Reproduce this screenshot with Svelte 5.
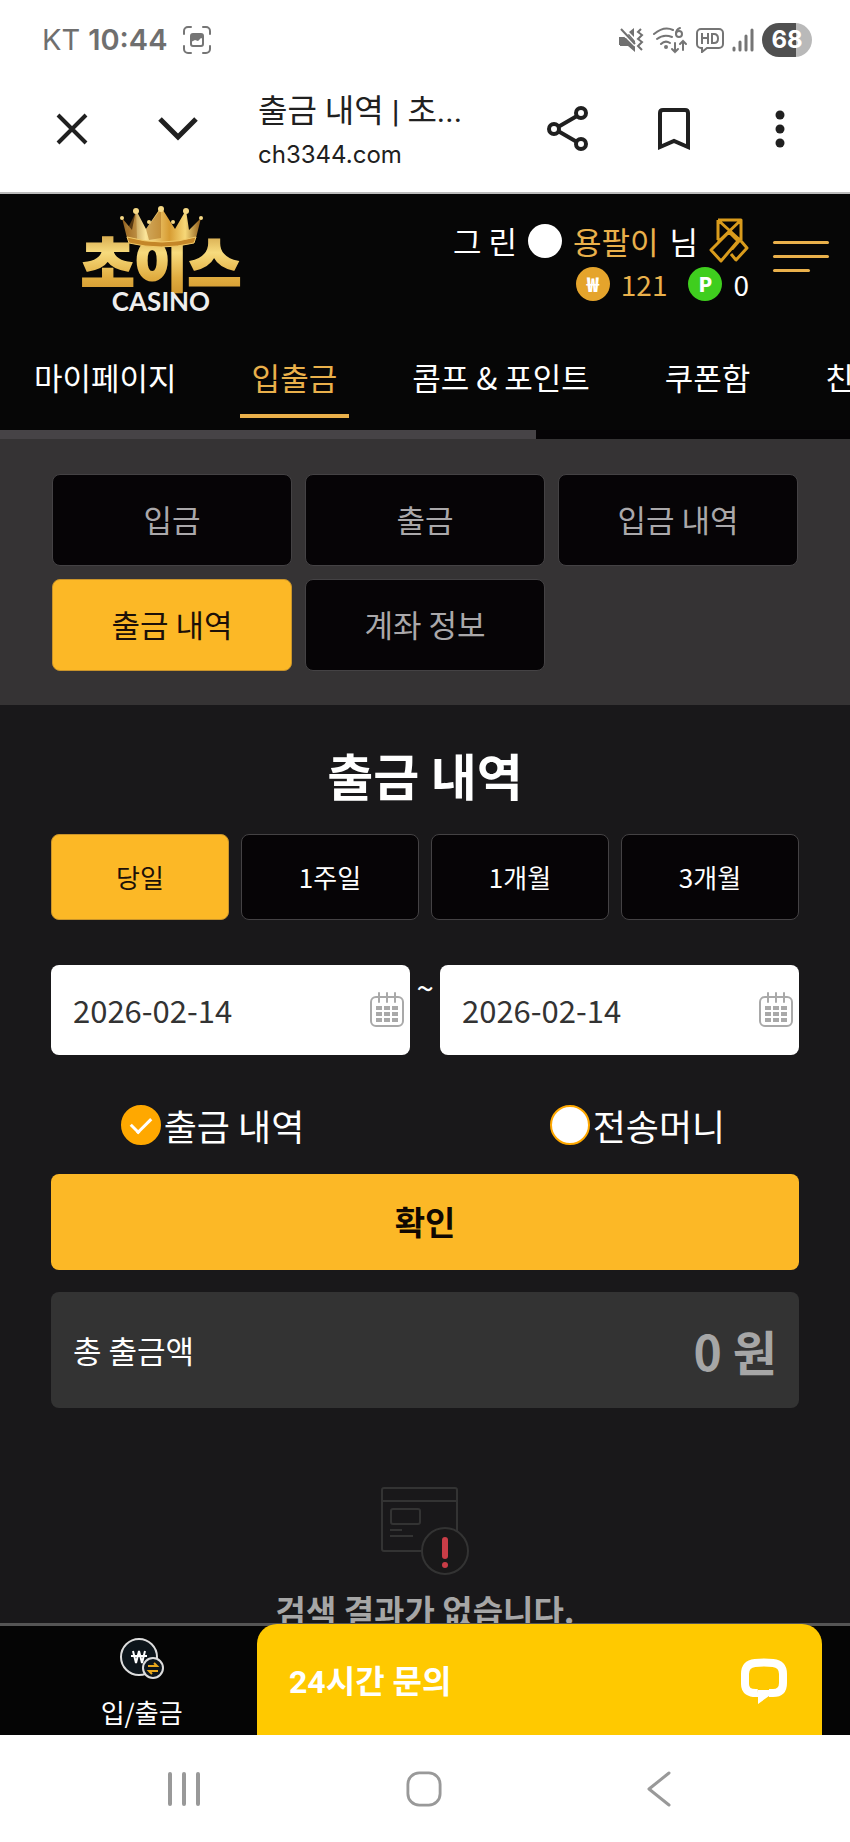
<script>
    const tabs = ['마이페이지', '입출금', '콤프 & 포인트', '쿠폰함', '친구추천'];
    const menus = ['입금', '출금', '입금 내역', '출금 내역', '계좌 정보'];
    const periods = ['당일', '1주일', '1개월', '3개월'];

    let tab = '입출금';
    let menu = '출금 내역';
    let period = '당일';
    let from = '2026-02-14';
    let to = '2026-02-14';
    let kind = 'withdraw';
    let total = 0;
</script>

<div class="phone">
    <div class="status">
        <span class="carrier">KT</span>
        <span class="clock">10:44</span>
        <svg class="capture" width="28" height="28" viewBox="0 0 28 28" fill="none" stroke="#757575" stroke-width="2" stroke-linecap="round">
            <path d="M1 8V5a4 4 0 0 1 4-4h3M20 1h3a4 4 0 0 1 4 4v3M27 20v3a4 4 0 0 1-4 4h-3M8 27H5a4 4 0 0 1-4-4v-3" />
            <path d="M10 8h8a2 2 0 0 1 2 2v8a2 2 0 0 1-2 2h-8a2 2 0 0 1-2-2v-8a2 2 0 0 1 2-2z" />
            <path d="M8 8h12v5l-2-1-3 3-3-1-4 2z" fill="#757575" stroke="none" />
        </svg>
        <div class="signals">
            <svg width="26" height="26" viewBox="0 0 26 26" fill="#707070">
                <path d="M1 10h5l5-3 6 7v10l-7-6H1zM11 5l5-4v9z" />
                <path d="M2 2l15 17" stroke="#fff" stroke-width="4" />
                <path d="M3 2l14 15" stroke="#707070" stroke-width="2" />
                <path d="M23 2l-3 3 4 3-4 4 4 3-4 4 4 4" fill="none" stroke="#707070" stroke-width="2" />
                <path d="M8 11l9 9v5l-7-6H2v-8z" />
            </svg>
            <svg width="36" height="28" viewBox="0 0 36 28" fill="none" stroke="#757575" stroke-width="2" stroke-linecap="round">
                <path d="M2 8c6-5 13-7 19-4M5 13c5-4 10-4 15-2M9 18c3-3 6-3 9-1" />
                <circle cx="14" cy="21" r="1" fill="#757575" />
                <path d="M28 2c-3 1-4 3-4 6" />
                <circle cx="27" cy="8" r="3" />
                <path d="M23 17v9M20 23l3 3 3-3M31 24v-9M28 18l3-3 3 3" />
            </svg>
            <svg width="28" height="26" viewBox="0 0 28 26" fill="none" stroke="#757575" stroke-width="2">
                <path d="M5 2h18a4 4 0 0 1 4 4v11a4 4 0 0 1-4 4H11l-5 4v-4H5a4 4 0 0 1-4-4V6a4 4 0 0 1 4-4z" />
                <path d="M6 6v11M12 6v11M6 11h6M16 7v9h2q4 0 4-4.500t-4-4.500z" />
            </svg>
            <svg width="22" height="24" viewBox="0 0 22 24" stroke="#757575" stroke-width="3" stroke-linecap="round">
                <path d="M2 20v2M8 14v8M14 8v14M20 2v20" />
            </svg>
            <span class="battery">68</span>
        </div>
    </div>

    <div class="browser">
        <button class="tool" aria-label="닫기">
            <svg width="32" height="32" viewBox="0 0 32 32" stroke="#202020" stroke-width="4"><path d="M2 2l28 28M30 2L2 30" /></svg>
        </button>
        <button class="tool" aria-label="접기">
            <svg width="40" height="26" viewBox="0 0 40 26" fill="none" stroke="#202020" stroke-width="5"><path d="M2 3l18 18L38 3" /></svg>
        </button>
        <div class="page-info">
            <div class="page-title">출금 내역 | 초...</div>
            <div class="page-host">ch3344.com</div>
        </div>
        <button class="tool" aria-label="공유">
            <svg width="42" height="46" viewBox="0 0 42 46" fill="none" stroke="#202020" stroke-width="4">
                <circle cx="7" cy="23" r="5" /><circle cx="34" cy="7" r="5" /><circle cx="34" cy="38" r="5" />
                <path d="M11 21l19-11M11 25l19 11" />
            </svg>
        </button>
        <button class="tool" aria-label="북마크">
            <svg width="32" height="42" viewBox="0 0 32 42" fill="none" stroke="#202020" stroke-width="4">
                <path d="M2 39V5q0-3 3-3h22q3 0 3 3v34l-14-6z" />
            </svg>
        </button>
        <button class="tool" aria-label="더보기">
            <svg width="10" height="38" viewBox="0 0 10 38" fill="#202020">
                <circle cx="5" cy="5" r="4.500" /><circle cx="5" cy="19" r="4.500" /><circle cx="5" cy="33" r="4.500" />
            </svg>
        </button>
    </div>

    <div class="site">
        <header>
            <a class="logo" href="#home" aria-label="초이스 CASINO">
                <svg width="170" height="120" viewBox="0 0 170 120">
                    <defs>
                        <linearGradient id="gold" x1="0" y1="0" x2="0" y2="1">
                            <stop offset="0" stop-color="#b87d24" />
                            <stop offset="0.4" stop-color="#f7db7d" />
                            <stop offset="0.7" stop-color="#e0ac3f" />
                            <stop offset="1" stop-color="#c98b25" />
                        </linearGradient>
                        <linearGradient id="crown" x1="0" y1="0" x2="1" y2="0">
                            <stop offset="0" stop-color="#8d5a18" />
                            <stop offset="0.3" stop-color="#fbe59a" />
                            <stop offset="0.6" stop-color="#d79c32" />
                            <stop offset="0.8" stop-color="#f7d878" />
                            <stop offset="1" stop-color="#8d5a18" />
                        </linearGradient>
                    </defs>
                    <text class="logo-ko" x="85" y="84" text-anchor="middle" fill="url(#gold)" stroke="url(#gold)">초이스</text>
                    <g transform="translate(0 3)">
                        <path d="M51 33L46 13l10 12 4-20 10 19L85 2l14 22 11-19 3 20 12-12-5 20q-35 10-69 0z" fill="url(#crown)" />
                        <path d="M70 24L85 4v29l-12 2zM50 27l10-20 1 27-9-2z" fill="#a56a1c" opacity="0.5" />
                        <path d="M51 32q35 10 69 0l-2 6q-33 8-65 0z" fill="#c48628" stroke="#f2ca68" />
                        <g fill="#f6d986">
                            <circle cx="46" cy="13" r="2" /><circle cx="60" cy="6" r="3" /><circle cx="85" cy="4" r="3" /><circle cx="110" cy="6" r="3" /><circle cx="125" cy="13" r="2" />
                            <circle cx="73" cy="17" r="2" /><circle cx="97" cy="17" r="2" />
                        </g>
                    </g>
                    <text class="logo-en" x="85" y="109" text-anchor="middle">CASINO</text>
                </svg>
            </a>
            <div class="user">
                <div class="line">
                    <span>그 린</span>
                    <span class="dot"></span>
                    <span class="gold">용팔이</span>
                    <span>님</span>
                    <svg class="rank" width="40" height="46" viewBox="0 0 40 46" fill="none" stroke="#d99b1c" stroke-width="3" stroke-linejoin="round">
                        <path d="M9 2h23v20M9 2v20M9 2l23 21M32 2L9 24M2 32L20 14l9 9L12 43zM32 23l6 7-11 12-5-6M23 31l7-8" />
                    </svg>
                </div>
                <div class="line points">
                    <span class="coin">₩</span>
                    <span class="gold">121</span>
                    <span class="coin green">P</span>
                    <span>0</span>
                </div>
            </div>
            <button class="menu" aria-label="메뉴"><i></i><i></i><i></i></button>
        </header>

        <nav class="tabs">
            {#each tabs as name}
                <a href="#tab" class:active={tab == name} on:click={() => tab = name}>{name}</a>
            {/each}
        </nav>
        <div class="scroll"><div class="thumb"></div></div>

        <div class="submenu">
            {#each menus as name}
                <button class="box" class:on={menu == name} on:click={() => menu = name}>{name}</button>
            {/each}
        </div>

        <main>
            <h1>출금 내역</h1>

            <div class="periods">
                {#each periods as name}
                    <button class="box" class:on={period == name} on:click={() => period = name}>{name}</button>
                {/each}
            </div>

            <div class="dates">
                <label class="date">
                    <input type="text" aria-label="시작일" bind:value={from} />
                    <svg width="34" height="36" viewBox="0 0 34 36" fill="none" stroke="#a9a9a9" stroke-width="2">
                        <rect x="1" y="5" width="32" height="29" rx="5" />
                        <path d="M9 1v9M17 1v9M25 1v9" stroke-linecap="round" />
                        <path d="M6 16h22M6 22h22M6 28h22" stroke-width="4" stroke-dasharray="6 2" />
                    </svg>
                </label>
                <span class="tilde">~</span>
                <label class="date">
                    <input type="text" aria-label="종료일" bind:value={to} />
                    <svg width="34" height="36" viewBox="0 0 34 36" fill="none" stroke="#a9a9a9" stroke-width="2">
                        <rect x="1" y="5" width="32" height="29" rx="5" />
                        <path d="M9 1v9M17 1v9M25 1v9" stroke-linecap="round" />
                        <path d="M6 16h22M6 22h22M6 28h22" stroke-width="4" stroke-dasharray="6 2" />
                    </svg>
                </label>
            </div>

            <div class="kinds">
                <label><input type="radio" name="kind" value="withdraw" bind:group={kind} />출금 내역</label>
                <label><input type="radio" name="kind" value="transfer" bind:group={kind} />전송머니</label>
            </div>

            <button class="confirm">확인</button>

            <div class="total">
                <span>총 출금액</span>
                <strong>{total} 원</strong>
            </div>

            <div class="empty">
                <svg width="90" height="90" viewBox="0 0 90 90" fill="none" stroke="#333" stroke-width="2">
                    <rect x="2" y="2" width="75" height="63" rx="2" />
                    <path d="M2 15h75M10 44h12M10 50h23" />
                    <rect x="11" y="23" width="29" height="15" rx="2" />
                    <circle cx="65" cy="65" r="23" fill="#191819" />
                    <path d="M65 54v16" stroke="#c93d47" stroke-width="6" stroke-linecap="round" />
                    <circle cx="65" cy="79" r="3" fill="#c93d47" stroke="none" />
                </svg>
                <p>검색 결과가 없습니다.</p>
            </div>
        </main>
    </div>

    <div class="bottom">
        <a class="cash" href="#cash">
            <svg width="46" height="44" viewBox="0 0 46 44" fill="#0d151b" stroke="#ddd" stroke-width="2">
                <circle cx="20" cy="20" r="18" />
                <path d="M14 14l3 12 3-12 3 12 3-12M12 19h16" fill="none" stroke="#fff" />
                <circle cx="34" cy="31" r="10" />
                <path d="M29 29h9l-3-3M39 34h-9l3 3" fill="none" stroke="#e9a81c" />
            </svg>
            <span>입/출금</span>
        </a>
        <button class="chat">
            <span>24시간 문의</span>
            <svg width="48" height="48" viewBox="0 0 48 48" fill="none" stroke="#fff" stroke-width="8">
                <path d="M18 35q-13 1-13-9V16Q5 6 15 5q9-1 18 0 10 1 10 11v9q0 10-10 10h-4" />
                <path d="M18 32v14l11-8h4l-4-6z" fill="#fff" stroke="none" />
            </svg>
        </button>
    </div>

    <div class="keys">
        <button aria-label="최근 앱">
            <svg width="34" height="36" viewBox="0 0 34 36" stroke="#999" stroke-width="4" stroke-linecap="round"><path d="M3 3v30M17 3v30M31 3v30" /></svg>
        </button>
        <button aria-label="홈">
            <svg width="36" height="36" viewBox="0 0 38 38" fill="none" stroke="#999" stroke-width="3"><rect x="2" y="2" width="34" height="34" rx="12" /></svg>
        </button>
        <button aria-label="뒤로">
            <svg width="24" height="38" viewBox="0 0 24 38" fill="none" stroke="#999" stroke-width="3" stroke-linecap="round" stroke-linejoin="round"><path d="M22 3L2 19l20 16" /></svg>
        </button>
    </div>
</div>

<style>
    :global(body) { margin: 0; background: #fff; }
    * { box-sizing: border-box; }
    svg { display: block; flex: none; }
    button { border: 0; padding: 0; background: none; font: inherit; color: inherit; cursor: pointer; }
    a { color: inherit; text-decoration: none; }

    .phone {
        display: flex;
        flex-direction: column;
        height: 100vh;
        font-family: "Noto Sans CJK KR", sans-serif;
        font-size: 31px;
        line-height: 44px;
    }

    .status {
        display: flex;
        align-items: center;
        flex: none;
        height: 80px;
        padding: 0 38px 0 42px;
        color: #6f6f6f;
        font-family: Inter, sans-serif;
        font-size: 29px;
    }
    .clock { margin-left: 8px; font-weight: 600; }
    .capture { margin-left: 15px; }
    .signals { display: flex; align-items: center; gap: 8px; margin-left: auto; }
    .battery {
        width: 50px;
        height: 34px;
        border-radius: 17px;
        background: linear-gradient(90deg, #505050 68%, #b9b9b9 68%);
        color: #fff;
        font-size: 24px;
        font-weight: 700;
        line-height: 34px;
        text-align: center;
    }

    .browser {
        display: flex;
        align-items: center;
        flex: none;
        height: 114px;
        padding: 0 17px 14px 19px;
        border-bottom: 2px solid #bbb;
        color: #202020;
    }
    .tool { display: grid; place-items: center; width: 106px; height: 80px; }
    .page-info { flex: 1; padding: 8px 0 0 27px; font-family: Roboto, "Noto Sans CJK KR", sans-serif; }
    .page-title { font-size: 32px; }
    .page-host { font-family: Inter, sans-serif; font-size: 24px; }

    .site {
        flex: 1;
        min-height: 0;
        overflow: hidden;
        background: #19181a;
        color: #fff;
    }

    header { display: flex; height: 144px; padding: 8px 21px 0 76px; background: #060606; }
    .logo-ko { font-size: 58px; font-weight: 900; stroke-width: 2px; }
    .logo-en { font-family: Lato, sans-serif; font-size: 26px; font-weight: 700; fill: #eee; }
    .user { margin-left: auto; padding-top: 16px; }
    .line { display: flex; align-items: center; justify-content: flex-end; gap: 11px; height: 46px; }
    .points { height: 40px; font-size: 28px; }
    .gold { color: #e9b04b; }
    .dot { width: 34px; height: 34px; border-radius: 50%; background: #fff; }
    .coin {
        width: 34px;
        height: 34px;
        border-radius: 50%;
        background: #e5a42c;
        font-size: 20px;
        font-weight: 900;
        line-height: 34px;
        text-align: center;
    }
    .green { margin-left: 10px; background: #3fce1e; }
    .menu { display: flex; flex-direction: column; gap: 11px; width: 56px; margin: 39px 0 0 24px; }
    .menu i { width: 100%; height: 3px; border-radius: 2px; background: #e9b04b; }
    .menu i:last-child { width: 37px; }

    .tabs { display: flex; gap: 51px; overflow: hidden; padding: 13px 22px 12px; background: #060606; }
    .tabs a { flex: none; padding: 4px 12px 15px; border-bottom: 4px solid transparent; white-space: nowrap; }
    .tabs .active { border-color: #e9b04b; color: #e9b04b; }
    .scroll { height: 9px; background: #060406; }
    .thumb { width: 63%; height: 9px; background: #464346; }

    .box { border: 1px solid #444244; border-radius: 8px; background: #060406; }
    .submenu {
        display: grid;
        grid-template-columns: repeat(3, 1fr);
        gap: 13px;
        padding: 35px 52px 34px;
        background: #353334;
    }
    .submenu .box { height: 92px; padding-bottom: 2px; color: #aaa8aa; }
    .submenu .on, .periods .on { border-color: #c8932a; background: #fcb826; color: #1c1008; }

    main { padding: 39px 51px 0; }
    h1 { margin: 0; font-size: 50px; font-weight: 700; line-height: 60px; text-align: center; }
    .periods { display: grid; grid-template-columns: repeat(4, 1fr); gap: 12px; margin-top: 30px; font-size: 26px; }
    .periods .box { height: 86px; }

    .dates { display: flex; margin-top: 45px; }
    .date {
        display: flex;
        align-items: center;
        flex: 1;
        min-width: 0;
        height: 90px;
        padding: 0 6px 0 22px;
        border-radius: 8px;
        background: #fff;
    }
    .date input { flex: 1; min-width: 0; border: 0; padding: 0; background: none; color: #333; font: inherit; outline: none; }
    .tilde { width: 30px; text-align: center; }

    .kinds { display: grid; grid-template-columns: 1fr 1fr; margin: 44px -51px 23px; font-size: 36px; line-height: 52px; }
    .kinds label { display: flex; align-items: center; justify-content: center; gap: 3px; }
    .kinds input {
        display: grid;
        place-items: center;
        appearance: none;
        width: 40px;
        height: 40px;
        margin: 0;
        border: 2px solid #ffa800;
        border-radius: 50%;
        background: #fff;
    }
    .kinds input:checked { background: #ffa800; }
    .kinds input:checked::after {
        content: '';
        width: 9px;
        height: 17px;
        margin-bottom: 5px;
        border: solid #fff;
        border-width: 0 3px 3px 0;
        transform: rotate(45deg);
    }

    .confirm {
        display: block;
        width: 100%;
        height: 96px;
        padding-bottom: 2px;
        border-radius: 8px;
        background: #fcb826;
        color: #100802;
        font-size: 33px;
        font-weight: 700;
    }
    .total {
        display: flex;
        align-items: center;
        justify-content: space-between;
        height: 116px;
        margin-top: 22px;
        padding: 0 22px;
        border-radius: 8px;
        background: #333;
    }
    .total strong { color: #a6a6a6; font-size: 48px; }
    .empty { display: flex; flex-direction: column; align-items: center; padding-top: 78px; color: #a6a6a6; }
    .empty p { margin: 12px 0; font-size: 33px; font-weight: 700; }

    .bottom {
        display: grid;
        grid-template-columns: repeat(3, 1fr);
        flex: none;
        position: relative;
        height: 112px;
        border-top: 3px solid #555;
        background: #050505;
        color: #fff;
    }
    .cash { display: flex; flex-direction: column; align-items: center; gap: 9px; padding-top: 11px; font-size: 26px; }
    /* chat widget floats over the rest of the bar */
    .chat {
        display: flex;
        align-items: center;
        justify-content: space-between;
        position: absolute;
        top: -2px;
        right: 28px;
        bottom: 0;
        left: 257px;
        padding: 4px 34px 0 32px;
        border-radius: 20px 20px 0 0;
        background: #ffc900;
        font-family: Roboto, "Noto Sans CJK KR", sans-serif;
        font-size: 32px;
        font-weight: 700;
    }

    .keys { display: flex; justify-content: space-between; align-items: center; flex: none; height: 107px; padding: 0 179px 0 167px; }
</style>
